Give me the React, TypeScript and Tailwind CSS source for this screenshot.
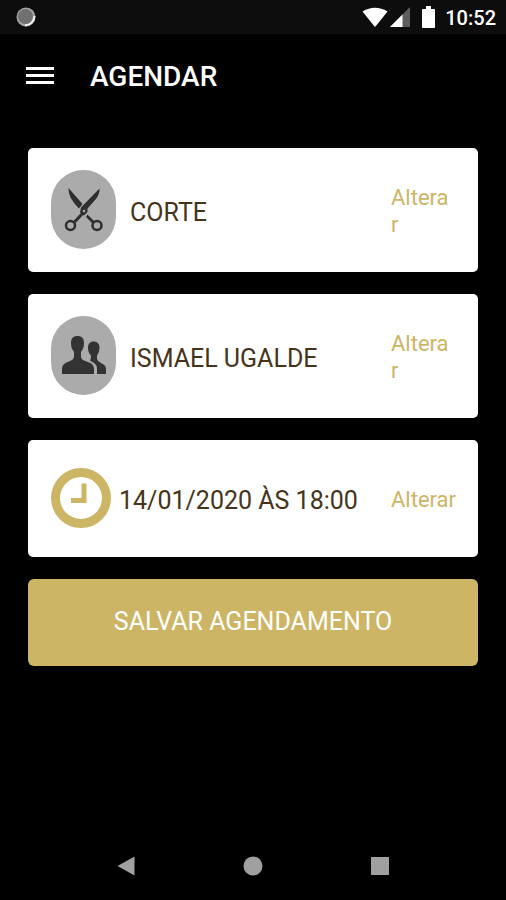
import type { ReactNode } from "react";

const StatusBar = () => {
  return (
    <div className="flex h-[34px] items-center justify-between bg-[#0d0d0d] pl-4 pr-[10px]">
      <svg className="h-5 w-5" viewBox="0 0 20 20" aria-hidden="true">
        <circle cx="10" cy="10" r="9.500" fill="#a3a3a3" />
        <path d="M18.500 9Q17.500 17.500 9 18.500" fill="none" stroke="#f5f5f5" strokeWidth="2" />
        <circle cx="9.500" cy="9.500" r="7.500" fill="#707070" />
      </svg>
      <div className="flex items-center">
        <svg className="h-5 w-[26px]" viewBox="0 0 26 20" aria-hidden="true">
          <path d="M0.5 4.5Q13-3 25.5 4.5L13.5 19.5Q13 20 12.5 19.5z" fill="#fff" />
        </svg>
        <svg className="ml-[2px] h-5 w-5" viewBox="0 0 20 20" aria-hidden="true">
          <path d="M0 20L20 0V20z" fill="#5c5c5c" />
          <path d="M0 20L12.500 7.500V20z" fill="#fff" />
        </svg>
        <svg className="ml-3 h-[22px] w-[13px]" viewBox="0 0 13 22" aria-hidden="true">
          <path d="M4 0H9V3H12Q13 3 13 4V21Q13 22 12 22H1Q0 22 0 21V4Q0 3 1 3H4z" fill="#fff" />
        </svg>
        <span className="ml-[10px] pt-[2px] text-xl leading-6 font-medium text-white">10:52</span>
      </div>
    </div>
  );
};

const Header = () => {
  return (
    <header className="flex h-[82px] items-center gap-9 px-[26px]">
      <button type="button" aria-label="Menu" className="flex w-7 flex-col gap-1">
        <span className="h-[3px] bg-white"></span>
        <span className="h-[3px] bg-white"></span>
        <span className="h-[3px] bg-white"></span>
      </button>
      <h1 className="pt-[3px] text-[28px] leading-8 font-medium text-white">AGENDAR</h1>
    </header>
  );
};

const ScissorsIcon = () => {
  return (
    <svg className="h-full w-full" viewBox="0 0 65 79" aria-hidden="true">
      <g fill="#2e2e2e">
        <path d="M17.500 18L31.500 34L28 38.500Q17 28 17.500 18z" />
        <path d="M48.500 18.500Q49 24 44.500 29.500L36.500 38.500V42L33 45.500L29 42.500L30 37.500z" />
        <path d="M36.500 44.500L43.500 51.500L41.500 53.500L35 47z" />
      </g>
      <path d="M32 43L23.500 52" stroke="#2e2e2e" strokeWidth="3" />
      <circle cx="33" cy="41" r="1.300" fill="#ababab" />
      <g fill="none" stroke="#2e2e2e" strokeWidth="2.500">
        <circle cx="19.500" cy="55.500" r="4.500" />
        <circle cx="46" cy="55.500" r="4.500" />
      </g>
    </svg>
  );
};

const PeopleIcon = () => {
  return (
    <svg className="h-full w-full" viewBox="0 0 65 79" aria-hidden="true">
      <g fill="#333">
        <path d="M26.500 20C31 20 33 22.500 33 27Q33 32.500 30 36V40Q30 43 33 44.500L39.500 47Q43 49 43 53V58H11V53Q11 49 14.500 47L20 44.500Q23 43 23 40V36Q20 32.500 20 27C20 22.500 22 20 26.500 20z" />
        <path d="M42.500 25.500C46.500 25.500 48.500 28 48.500 32Q48.500 36.500 46 39.500V43Q46.500 45.500 50 47Q55 49 55 53V58H46V53Q46 49 43 47L39 44.500Q40 43 40 39.500Q37 36.500 37 32C37 28 39 25.500 42.500 25.500z" />
      </g>
    </svg>
  );
};

const ClockIcon = () => {
  return (
    <svg className="h-15 w-15 shrink-0" viewBox="0 0 60 60" aria-hidden="true">
      <circle cx="30" cy="30" r="25.500" fill="none" stroke="#cdb566" strokeWidth="9" />
      <path d="M33 15.500V32.500H20" fill="none" stroke="#cdb566" strokeWidth="5" />
    </svg>
  );
};

const Avatar = ({ children }: { children: ReactNode }) => {
  return (
    <div className="h-[79px] w-[65px] shrink-0 overflow-hidden rounded-full bg-[#ababab]">
      {children}
    </div>
  );
};

const Card = ({ icon, label, gap, action }: { icon: ReactNode; label: string; gap: string; action: string }) => {
  return (
    <section className="flex items-center rounded-[5px] bg-white pt-[22px] pr-[22px] pb-[23px] pl-[23px]">
      {icon}
      <p className={`flex-1 pt-[6px] text-[25px] leading-8 text-[#45341a] ${gap}`}>{label}</p>
      <button
        type="button"
        aria-label={`Alterar ${label}`}
        className={`shrink-0 pt-[3px] text-left text-[22px] leading-[27px] text-[#cdb566] ${action}`}
      >
        Alterar
      </button>
    </section>
  );
};

const NavBar = () => {
  return (
    <nav className="flex h-[68px] items-center justify-center gap-[107px]">
      <button type="button" aria-label="Voltar">
        <svg className="h-5 w-5" viewBox="0 0 20 20">
          <path d="M1.500 10L18.500 0.500V19.500z" fill="#a0a0a0" />
        </svg>
      </button>
      <button type="button" aria-label="Início">
        <svg className="h-5 w-5" viewBox="0 0 20 20">
          <circle cx="10" cy="10" r="9.500" fill="#a0a0a0" />
        </svg>
      </button>
      <button type="button" aria-label="Recentes">
        <svg className="h-5 w-5" viewBox="0 0 20 20">
          <path d="M1 1H19V19H1z" fill="#a0a0a0" />
        </svg>
      </button>
    </nav>
  );
};

const App = () => {
  return (
    <div className="flex min-h-screen flex-col bg-black font-[Roboto,sans-serif]">
      <StatusBar />
      <Header />
      <main className="flex flex-1 flex-col gap-[22px] px-7 pt-8">
        <Card
          icon={<Avatar><ScissorsIcon /></Avatar>}
          label="CORTE"
          gap="pl-[14px]"
          action="mr-1 w-[61px] break-all"
        />
        <Card
          icon={<Avatar><PeopleIcon /></Avatar>}
          label="ISMAEL UGALDE"
          gap="pl-[14px]"
          action="mr-1 w-[61px] break-all"
        />
        <Card
          icon={<div className="py-[6px]"><ClockIcon /></div>}
          label="14/01/2020 ÀS 18:00"
          gap="pl-2"
          action="whitespace-nowrap"
        />
        <button type="button" className="rounded-md bg-[#cdb566] pt-[27px] pb-[28px] text-[25px] leading-8 text-white">
          SALVAR AGENDAMENTO
        </button>
      </main>
      <NavBar />
    </div>
  );
};

export default App;
